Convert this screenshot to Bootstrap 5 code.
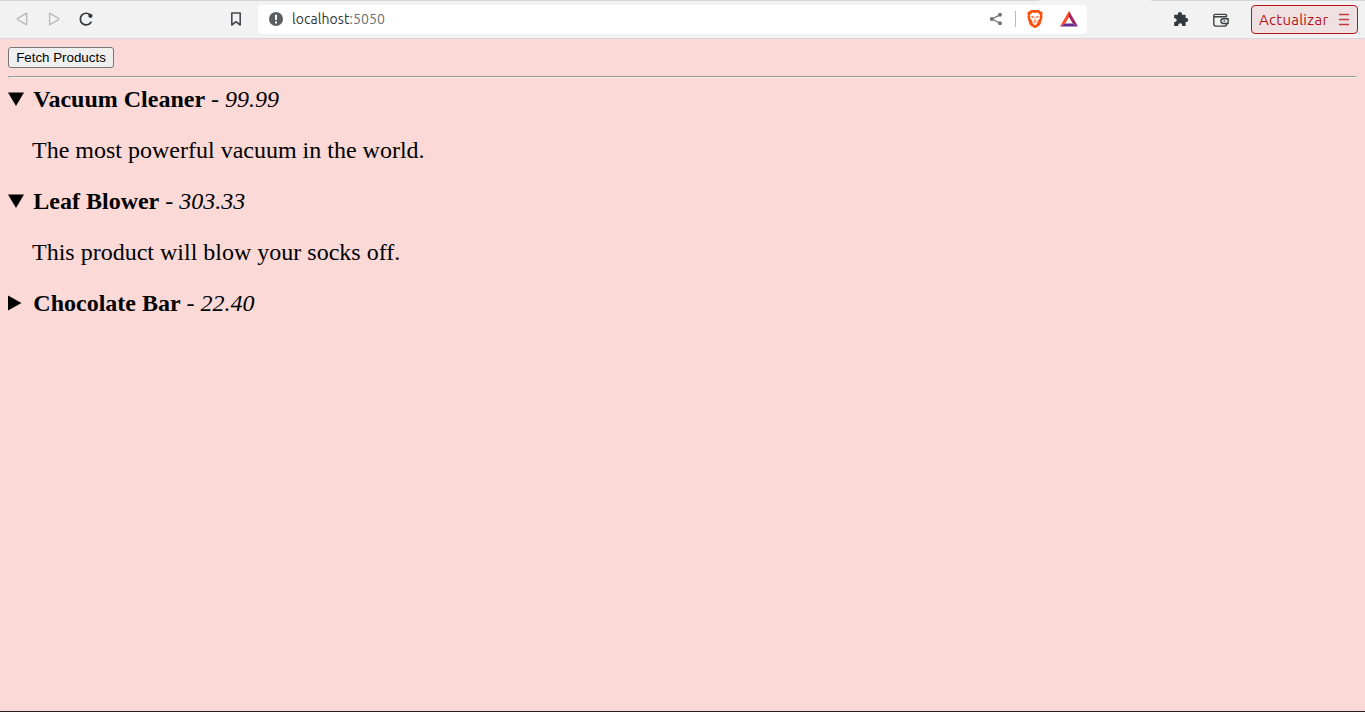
<!DOCTYPE html>
<html lang="es">
<head>
<meta charset="utf-8">
<meta name="viewport" content="width=device-width, initial-scale=1">
<title>localhost:5050</title>
<link rel="stylesheet" href="https://cdn.jsdelivr.net/npm/bootstrap@5.3.0/dist/css/bootstrap.min.css">
<script src="https://cdn.jsdelivr.net/npm/bootstrap@5.3.0/dist/js/bootstrap.bundle.min.js"></script>
<style>
body{background:#fad9d7;color:#000;border-bottom:1px solid #231c20;font-family:"Liberation Serif",serif}
.toolbar{height:39px;background:#f2f2f2;border-bottom:1px solid #d5d9dc;font-family:Ubuntu,"Noto Sans",sans-serif}
.tabline{height:1px;flex:none;background:linear-gradient(90deg,#d3d7da 1039px,#f2f2f2 1039px 1151px,#d3d7da 1151px)}
.controls{padding:0 7px 0 14px}
.toolbar svg{display:block;flex:none}
.controls>svg{margin-bottom:2px}
.controls .bookmark{margin-left:134px}
.controls .extensions{margin-left:86px}
.controls .wallet{margin:0 0 0 23px}
.address{width:829px;height:29px;background:#fff;border-radius:4px;margin-left:14px;padding:0 9px 2px 10px;font-size:14px}
.address .host{color:#303438;letter-spacing:.07px;margin-left:8px;line-height:20px}
.address .port{color:#6b6f73}
.address .rewards{margin-left:17px}
.rule{width:1px;height:16px;background:#b9b9b9;margin:0 11px 0 12px}
.update{width:107px;height:29px;border:1px solid #b3151b;border-radius:4px;background:#efe1e1;color:#b3151b;font-size:15px;padding:0 7px;margin-left:21px}
.update span{letter-spacing:.26px;line-height:20px}
.update svg{margin-bottom:1px}
.fetch{font:13.333px/15px "Liberation Sans",sans-serif;height:21px;width:106px;padding:0;background:#efefef;border:1px solid #767676;border-radius:3px;color:#000}
.page{padding:8px 8px 0}
.page hr{margin:8px 0;border:1px solid;border-color:#9a9a9a #eee #eee #9a9a9a;opacity:1;height:2px}
.product{font-size:24px;line-height:27px}
.product summary{list-style:none}
.product summary::-webkit-details-marker{display:none}
.arrow{width:25.3px;flex:none}
.product .closed,.product[open] .opened{display:block}
.product[open] .closed,.product .opened{display:none}
.product p{margin:24px 0 24px 24px}
</style>
</head>
<body class="vh-100 overflow-hidden">
<header class="toolbar d-flex flex-column">
<div class="tabline"></div>
<div class="controls d-flex align-items-center flex-grow-1">
<svg width="80" height="18" viewBox="0 0 80 18" fill="none"><path d="M12.7 3.2v11.6L3.6 9.6Q3 9 3.6 8.4Z M35.6 3.2v11.6L44.7 9.6Q45.3 9 44.7 8.4Z" stroke="#b9bbbd" stroke-width="1.4" stroke-linejoin="round"/><path d="M77 12.2A5.8 5.8 0 1 1 76 4.7" stroke="#34383c" stroke-width="1.7" stroke-linecap="round"/><circle cx="76.4" cy="5.8" r="2.1" fill="#34383c"/></svg>
<svg class="bookmark" width="16" height="18" viewBox="0 0 16 18"><path d="M3.8 3h8.4v12L8 11.7 3.8 15Z" fill="none" stroke="#45484c" stroke-width="1.6" stroke-linejoin="round"/></svg>
<div class="address d-flex align-items-center">
<svg width="16" height="16" viewBox="0 0 16 16"><circle cx="8" cy="8" r="7" fill="#5a5e62"/><path d="M8 3.8v5.1M8 10.5v2" stroke="#fff" stroke-width="2"/></svg>
<span class="host">localhost<span class="port">:5050</span></span>
<svg class="ms-auto" width="14" height="14" viewBox="0 0 14 14"><path d="M11 2.8 3 7l8 4.3" fill="none" stroke="#737373" stroke-width="1.3"/><g fill="#737373"><circle cx="11" cy="2.7" r="2"/><circle cx="2.8" cy="7" r="2"/><circle cx="11" cy="11.3" r="2"/></g></svg>
<div class="rule"></div>
<svg width="16" height="20" viewBox="0 0 16 20"><path d="m4.1 1h7.8l1.6 1.6 1.2-.2 1 2-.6 1.8.5 1.5-1.8 6.5q-.5 1.8-2 2.8L8 19.2 4.2 17q-1.5-1-2-2.8L.4 7.7.9 6.2.3 4.4l1-2 1.2.2Z" fill="#fb4f0a"/><path d="m5.4 3.6 2.6.5 2.6-.5 2.5 2.5-.5 1.8.3 1.3-2 2.6-.7 2.8L8 16.5l-2.2-1.9-.7-2.8-2-2.6.3-1.3-.5-1.8Z" fill="#fff"/><path d="m4.4 7.2 2.3.5-.8 1.2ZM11.6 7.2l-2.3.5.8 1.2ZM6.5 11.6 8 12.5l1.5-.9M8 8v3.5M6.5 14.1 8 13.4l1.5.7" fill="#fb4f0a" stroke="#fb4f0a" stroke-width=".5"/></svg>
<svg class="rewards" width="18" height="16" viewBox="0 0 18 16"><path d="M9 0 0 15.5l5.2-3L9 6Z" fill="#ff4724"/><path d="m9 0 9 15.5-5.2-3L9 6Z" fill="#9e1f63"/><path d="M0 15.5h18l-5.2-3H5.2Z" fill="#662d91"/></svg>
</div>
<svg class="extensions" width="16" height="16" viewBox="0 0 16 16"><path d="M1.2 3.8h3.6v-.6a2.1 2.1 0 1 1 4.2 0v.6h3.6V7h.6a2 2 0 1 1 0 4h-.6v4H9.2v-.7a2 2 0 1 0-4 0v.7h-4v-4h.6a1.9 1.9 0 1 0 0-3.8h-.6Z" fill="#33383c"/></svg>
<svg class="wallet" width="18" height="16" viewBox="0 0 18 16"><g fill="none" stroke="#3d4145" stroke-width="1.4"><path d="M14.5 5V3.5Q14.5 2.4 13.4 2.4H3.1Q1.8 2.4 1.8 3.7V12Q1.8 14.1 3.9 14.1h8.7q1.9 0 1.9-1.9M2 4.7h12.5M16.1 6.7h-4.8a2.3 2.3 0 0 0 0 4.8h4.8Z"/><path d="M11.5 9.1h1.6"/></g></svg>
<div class="update d-flex align-items-center justify-content-between"><span>Actualizar</span>
<svg width="11" height="13" viewBox="0 0 11 13"><path d="M0 1.5h10M0 6.5h10M0 11.5h10" stroke="#c43c40" stroke-width="1.7"/></svg></div>
</div>
</header>
<main class="page">
<button type="button" class="fetch d-block">Fetch Products</button>
<hr>
<section>
<details class="product" open><summary class="d-flex"><span class="arrow"><svg class="opened" width="16" height="27"><path d="M0 6.5h16L8 20Z"/></svg><svg class="closed" width="16" height="27"><path d="M0 5.5v15L13.5 13Z"/></svg></span><div><strong>Vacuum Cleaner</strong> - <em>99.99</em></div></summary><p>The most powerful vacuum in the world.</p></details>
<details class="product" open><summary class="d-flex"><span class="arrow"><svg class="opened" width="16" height="27"><path d="M0 6.5h16L8 20Z"/></svg><svg class="closed" width="16" height="27"><path d="M0 5.5v15L13.5 13Z"/></svg></span><div><strong>Leaf Blower</strong> - <em>303.33</em></div></summary><p>This product will blow your socks off.</p></details>
<details class="product"><summary class="d-flex"><span class="arrow"><svg class="opened" width="16" height="27"><path d="M0 6.5h16L8 20Z"/></svg><svg class="closed" width="16" height="27"><path d="M0 5.5v15L13.5 13Z"/></svg></span><div><strong>Chocolate Bar</strong> - <em>22.40</em></div></summary><p>A delicious chocolate bar.</p></details>
</section>
</main>
</body>
</html>
